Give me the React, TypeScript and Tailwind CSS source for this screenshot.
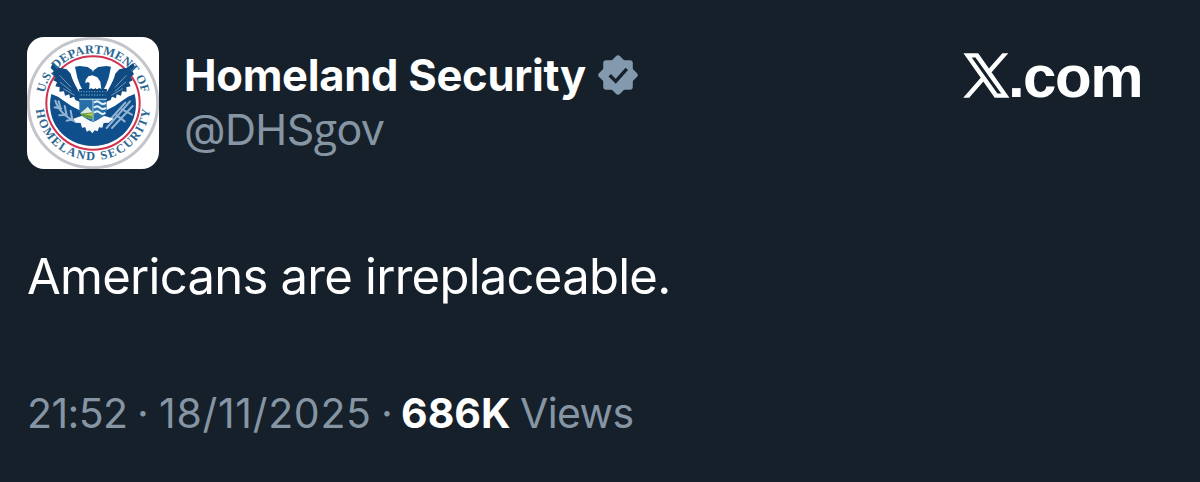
function Seal() {
  return (
    <svg viewBox="21 21 396 396" className="size-full">
      <defs>
        <path id="arc-top" d="M70 219a149 149 0 0 1 298 0" />
        <path id="arc-bottom" d="M47 219a172 172 0 0 0 344 0" />
        <g id="wing">
          <path
            d="M98 99l20 14 22 5 13 14 8 22 14 22 7 14-2 26-14-6-4-10-12 5-2-12-13 4-3-13-14 1 1-13-13-3 5-12-11-6 6-10-10-8 5-10-9-9z"
            fill="#114a80"
          />
          <path d="M119 136l34 36M120 156l34 28M130 176l34 20" stroke="#6f9cc0" strokeWidth="3" fill="none" />
          <path d="M165 110l14-2 24 3 14 10 5 14v46h-34l-8-16-8-22z" fill="#0f4f8b" />
          <path d="M150 122l11 6 16 40 14 22-9 4-16-28-10-22z" fill="#fff" />
        </g>
      </defs>
      <circle cx="219" cy="219" r="194" fill="#fff" stroke="#c3c5cb" strokeWidth="9" />
      <circle cx="219" cy="219" r="140" fill="#fff" stroke="#cf3350" strokeWidth="6" />

      {/* lower field */}
      <path d="M94 192c-20 80 38 156 125 156s145-76 125-156l-20 8-40 28-28 14h-74l-28-14-40-28z" fill="#0f4f8b" />

      {/* olive branch and arrows */}
      <g stroke="#93b4d3" strokeWidth="6" fill="none" strokeLinecap="round">
        <path d="M106 212c8 28 26 46 62 64M104 232l20 4M116 214l6 22M118 256l20-2M134 228l6 28M140 272l18-4M152 242l4 22" />
        <path d="M330 214l-70 80M338 228l-62 66M316 218l-52 58M306 238l30 16M290 256l24 18" />
      </g>

      {/* eagle */}
      <use href="#wing" />
      <use href="#wing" transform="matrix(-1 0 0 1 438 0)" />
      <path d="M180 180h78v24h-78z" fill="#0f4f8b" />
      <path d="M197 150l8-11 12-3 15 6 9 13 3 22-7-4-5 7-6-6-6 6-6-6-7 5 2-19-5-4-8 4z" fill="#fff" />
      <path
        d="M160 266l24-8 33 4 38-4 26 8-16 12-14 1-4 14-10-1-4 12-9-3-7 9-8-9-9 4-4-13-10 1-4-14-14-1z"
        fill="#f7fafb"
      />

      {/* shield */}
      <path d="M178 177h82v62c0 17-20 28-41 37-21-9-41-20-41-37z" fill="#286fa9" />
      <path d="M178 177h82v28h-82z" fill="#0b477c" />
      <path d="M182 185h74M182 195h74" stroke="#5791bd" strokeWidth="4" strokeDasharray="4 4" />
      <path d="M178 208h82M219 208v66" stroke="#b9d4e5" strokeWidth="3" />
      <path d="M222 218q9-8 18 0t18 0M222 233q9-8 18 0t18 0M222 248q9-8 18 0t16 0" stroke="#e3f3fa" strokeWidth="6" fill="none" />
      <path d="M181 250l14-12 8-8 15 17v20c-16-1-28-6-37-17z" fill="#dce9df" />
      <path d="M180 251l38-4v20c-16-1-29-6-38-16z" fill="#5b9b43" />
      <path d="M192 253l26-3v8z" fill="#c8c94e" />

      <g fontFamily="'Liberation Serif', serif" fontWeight="700" fontSize="37" fill="#2b6591">
        <text>
          <textPath href="#arc-top" startOffset="30" textLength="408">U.S. DEPARTMENT OF</textPath>
        </text>
        <text>
          <textPath href="#arc-bottom" startOffset="20" textLength="500">HOMELAND SECURITY</textPath>
        </text>
      </g>
    </svg>
  );
}

function VerifiedBadge() {
  return (
    <svg viewBox="-21 -21 42 42" className="size-[42px]">
      <g fill="#8299ae">
        <rect x="-14.8" y="-14.8" width="29.6" height="29.6" rx="3" />
        <rect x="-14.8" y="-14.8" width="29.6" height="29.6" rx="3" transform="rotate(45)" />
      </g>
      <path d="M-8.3 .3l6 6L8.8-6.2" fill="none" stroke="#16202a" strokeWidth="3.4" />
    </svg>
  );
}

function XLogo() {
  return (
    <svg viewBox="0 0 24 24" className="mt-[17px] h-[43px] w-[43px] overflow-visible">
      <path
        fill="#fff"
        stroke="#fff"
        strokeWidth=".9"
        d="M14.258 10.152L23.176 0h-2.113l-7.747 8.813L7.133 0H0l9.352 13.328L0 23.973h2.113l8.176-9.309 6.531 9.309h7.133zm-2.895 3.293l-.949-1.328L2.875 1.56h3.246l6.086 8.523.945 1.328 7.91 11.078h-3.246zm0 0"
      />
    </svg>
  );
}

export default function App() {
  return (
    <div className="h-[482px] w-[1200px] overflow-hidden bg-[#16202a] px-[27px] pt-[37px] font-['Inter',sans-serif] whitespace-nowrap text-[#8595a4]">
      <header className="flex items-start">
        <div className="size-[132px] overflow-hidden rounded-[17px] bg-white">
          <Seal />
        </div>
        <div className="ml-[25px] pt-[11px]">
          <div className="flex items-center text-[43.5px] leading-[54px] font-bold text-white">
            <span className="mr-[11px] tracking-[-0.27px]">Homeland Security</span>
            <VerifiedBadge />
          </div>
          <div className="text-[43px] leading-[54px] tracking-[-0.6px]">
            @DHS<span className="font-['Open_Sans',sans-serif]">g</span>ov
          </div>
        </div>
        <div className="mr-[31px] ml-auto flex text-white">
          <XLogo />
          <span className="font-['Liberation_Sans',sans-serif] text-[60px] leading-[80px] font-bold tracking-[-1.5px]">.com</span>
        </div>
      </header>
      <p className="mt-[72px] w-max text-[49px] leading-[72px] tracking-[-0.74px] text-white">Americans are irreplaceable.</p>
      <div className="mt-[72px] flex text-[41px] leading-[56px]">
        <span className="w-[110px] tracking-[-0.6px]">21:52</span>
        <span className="w-[22px]">·</span>
        <span className="w-[222px] tracking-[0.7px]">18/11/2025</span>
        <span className="w-[20px]">·</span>
        <b className="w-[119px] font-bold text-white">686K</b>
        <span className="tracking-[-0.6px]">Views</span>
      </div>
    </div>
  );
}
